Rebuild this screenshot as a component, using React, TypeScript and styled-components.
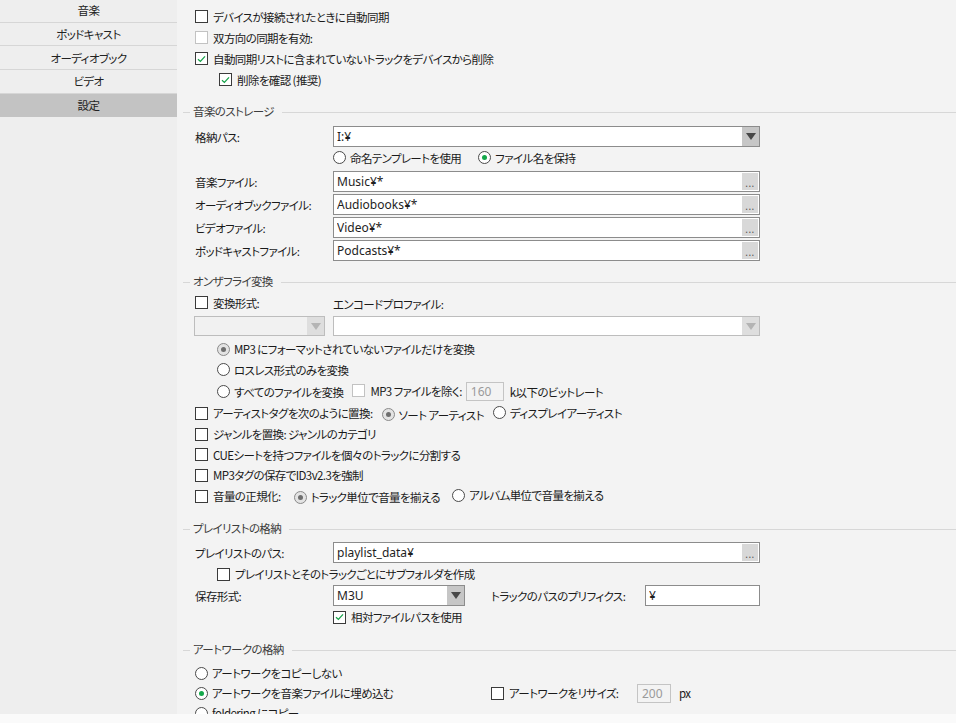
import React from "react";
import styled, { createGlobalStyle, css } from "styled-components";

const GlobalStyle = createGlobalStyle`
  html, body {
    margin: 0;
    background: #f3f3f3;
    overflow: hidden;
  }
  body {
    font-family: "Noto Sans CJK JP", "Noto Sans", sans-serif;
    font-size: 11.5px;
    letter-spacing: -0.6px;
    color: #1a1a1a;
    font-feature-settings: "palt";
  }
`;

const Window = styled.div`
  width: 956px;
  height: 723px;
  display: flex;
  flex-direction: column;
`;

const Body = styled.div`
  height: 714px;
  display: flex;
  overflow: hidden;
`;

const BottomStrip = styled.div`
  flex: 1;
  background: #fafafa;
`;

/* ---------- sidebar ---------- */

const Sidebar = styled.nav`
  width: 177px;
  flex-shrink: 0;
  background: #eeeeee;
  display: flex;
  flex-direction: column;
`;

const NavItem = styled.div<{ $active?: boolean; $first?: boolean }>`
  height: 22.7px;
  flex-shrink: 0;
  display: flex;
  align-items: center;
  justify-content: center;
  border-bottom: 1px solid #d6d6d6;
  color: #222;
  ${({ $first }) =>
    $first &&
    css`
      margin-top: -1px;
    `}
  ${({ $active }) =>
    $active &&
    css`
      background: #c3c3c3;
      border-bottom-color: #c3c3c3;
    `}
`;

/* ---------- main panel ---------- */

const Main = styled.main`
  flex: 1;
  background: #f3f3f3;
  padding: 6px 0 0 18px;
  display: flex;
  flex-direction: column;
  min-width: 0;
`;

const Row = styled.div<{ $h?: number; $indent?: number; $gap?: number }>`
  height: ${({ $h }) => $h ?? 21}px;
  flex-shrink: 0;
  display: flex;
  align-items: center;
  padding-left: ${({ $indent }) => $indent ?? 0}px;
  gap: ${({ $gap }) => $gap ?? 0}px;
  white-space: nowrap;
`;

const SectionHeader = styled.div<{ $top: number }>`
  margin: ${({ $top }) => $top}px 0 0 -12px;
  height: 20px;
  flex-shrink: 0;
  display: flex;
  align-items: center;
  gap: 3px;
  color: #3c3c3c;
  white-space: nowrap;

  &::before {
    content: "";
    width: 7px;
    height: 1px;
    background: #d7d7d7;
    margin-top: 3px;
  }
  &::after {
    content: "";
    flex: 1;
    height: 1px;
    background: #d7d7d7;
    margin: 3px 0 0 5px;
  }
`;

const FieldLabel = styled.span`
  width: 138px;
  flex-shrink: 0;
`;

const Text = styled.span<{ $ml?: number }>`
  margin-left: ${({ $ml }) => $ml ?? 0}px;
`;

const Cell = styled.div<{ $w: number }>`
  width: ${({ $w }) => $w}px;
  flex-shrink: 0;
  display: flex;
  align-items: center;
`;

/* ---------- controls ---------- */

const Box = styled.span<{ $disabled?: boolean }>`
  width: 13px;
  height: 13px;
  box-sizing: border-box;
  flex-shrink: 0;
  border: 1px solid ${({ $disabled }) => ($disabled ? "#c2c2c2" : "#3a3a3a")};
  background: #ffffff;
  display: inline-flex;
  align-items: center;
  justify-content: center;
`;

const Circle = styled.span<{ $tone?: "green" | "gray" | "off" }>`
  width: 13px;
  height: 13px;
  box-sizing: border-box;
  flex-shrink: 0;
  border-radius: 50%;
  border: 1px solid ${({ $tone }) => ($tone === "gray" ? "#8a8a8a" : "#4a4a4a")};
  background: ${({ $tone }) => ($tone === "gray" ? "#e3e3e3" : "#ffffff")};
  display: inline-flex;
  align-items: center;
  justify-content: center;

  &::after {
    content: "";
    width: 5px;
    height: 5px;
    border-radius: 50%;
    display: ${({ $tone }) => ($tone === "green" || $tone === "gray" ? "block" : "none")};
    background: ${({ $tone }) => ($tone === "gray" ? "#6e6e6e" : "#14a84a")};
  }
`;

const OptionLabel = styled.label<{ $gap?: number }>`
  display: inline-flex;
  align-items: center;
  gap: ${({ $gap }) => $gap ?? 5}px;
  white-space: nowrap;
`;

function Check({
  checked,
  disabled,
  children,
}: {
  checked?: boolean;
  disabled?: boolean;
  children?: React.ReactNode;
}) {
  return (
    <OptionLabel>
      <Box $disabled={disabled}>
        {checked && (
          <svg width="9" height="8" viewBox="0 0 9 8">
            <polyline
              points="1,4.2 3.4,6.4 8,1.4"
              fill="none"
              stroke="#17a34a"
              strokeWidth="1.3"
            />
          </svg>
        )}
      </Box>
      {children}
    </OptionLabel>
  );
}

function Radio({
  tone = "off",
  children,
}: {
  tone?: "green" | "gray" | "off";
  children: React.ReactNode;
}) {
  return (
    <OptionLabel $gap={4}>
      <Circle $tone={tone} />
      {children}
    </OptionLabel>
  );
}

const Field = styled.div<{ $w: number; $h?: number; $muted?: boolean; $disabled?: boolean }>`
  width: ${({ $w }) => $w}px;
  height: ${({ $h }) => $h ?? 21}px;
  box-sizing: border-box;
  flex-shrink: 0;
  display: flex;
  align-items: center;
  border: 1px solid ${({ $muted }) => ($muted ? "#bdbdbd" : "#8c8c8c")};
  background: ${({ $disabled }) => ($disabled ? "#f1f1f1" : "#ffffff")};
  padding-left: 3px;
  color: #1e1e1e;
  font-family: "Noto Sans", "Noto Sans CJK JP", sans-serif;
  font-size: 12px;
  letter-spacing: normal;
  font-feature-settings: normal;
`;

const FieldValue = styled.span`
  flex: 1;
  overflow: hidden;
`;

const SmallField = styled.div<{ $w: number }>`
  width: ${({ $w }) => $w}px;
  height: 19px;
  box-sizing: border-box;
  flex-shrink: 0;
  display: flex;
  align-items: center;
  padding-left: 4px;
  border: 1px solid #c4c4c4;
  background: #f3f3f3;
  color: #9a9a9a;
  font-family: "Noto Sans", sans-serif;
  font-size: 12px;
  letter-spacing: normal;
`;

const Ellipsis = styled.span`
  width: 16px;
  align-self: stretch;
  margin: 1px;
  background: #d8d8d8;
  color: #555;
  font-size: 10px;
  line-height: 1;
  display: flex;
  align-items: flex-end;
  justify-content: center;
  padding-bottom: 2px;
  letter-spacing: 0.5px;
`;

const DropButton = styled.span<{ $muted?: boolean }>`
  width: 17px;
  align-self: stretch;
  background: ${({ $muted }) => ($muted ? "#dedede" : "#c6c6c6")};
  display: flex;
  align-items: center;
  justify-content: center;

  &::after {
    content: "";
    border-left: 5px solid transparent;
    border-right: 5px solid transparent;
    border-top: 7px solid ${({ $muted }) => ($muted ? "#b4b4b4" : "#474747")};
  }
`;

function PathField({ value, w = 427 }: { value: string; w?: number }) {
  return (
    <Field $w={w}>
      <FieldValue>{value}</FieldValue>
      <Ellipsis>...</Ellipsis>
    </Field>
  );
}

function Select({
  value,
  w,
  h,
  muted,
  disabled,
}: {
  value?: string;
  w: number;
  h?: number;
  muted?: boolean;
  disabled?: boolean;
}) {
  return (
    <Field $w={w} $h={h} $muted={muted} $disabled={disabled}>
      <FieldValue>{value}</FieldValue>
      <DropButton $muted={muted} />
    </Field>
  );
}

const navItems = ["音楽", "ポッドキャスト", "オーディオブック", "ビデオ", "設定"];

const pathRows = [
  { label: "音楽ファイル:", value: "Music¥*" },
  { label: "オーディオブックファイル:", value: "Audiobooks¥*" },
  { label: "ビデオファイル:", value: "Video¥*" },
  { label: "ポッドキャストファイル:", value: "Podcasts¥*" },
];

export default function App() {
  return (
    <Window>
      <GlobalStyle />
      <Body>
        <Sidebar>
          {navItems.map((item, i) => (
            <NavItem key={item} $first={i === 0} $active={item === "設定"}>
              {item}
            </NavItem>
          ))}
        </Sidebar>

        <Main>
          <Row>
            <Check>デバイスが接続されたときに自動同期</Check>
          </Row>
          <Row>
            <Check disabled>双方向の同期を有効:</Check>
          </Row>
          <Row>
            <Check checked>自動同期リストに含まれていないトラックをデバイスから削除</Check>
          </Row>
          <Row $indent={24}>
            <Check checked>削除を確認 (推奨)</Check>
          </Row>

          <SectionHeader $top={11}>音楽のストレージ</SectionHeader>
          <Row $h={21} style={{ marginTop: 5 }}>
            <FieldLabel>格納パス:</FieldLabel>
            <Select value="I:¥" w={427} />
          </Row>
          <Row $indent={138} $gap={17}>
            <Radio>命名テンプレートを使用</Radio>
            <Radio tone="green">ファイル名を保持</Radio>
          </Row>
          {pathRows.map((r, i) => (
            <Row key={r.label} style={{ marginTop: i === 0 ? 3 : 2 }}>
              <FieldLabel>{r.label}</FieldLabel>
              <PathField value={r.value} />
            </Row>
          ))}

          <SectionHeader $top={10}>オンザフライ変換</SectionHeader>
          <Row style={{ marginTop: 2 }}>
            <FieldLabel>
              <Check>変換形式:</Check>
            </FieldLabel>
            <Text>エンコードプロファイル:</Text>
          </Row>
          <Row $h={20} $gap={8} style={{ marginTop: 2, marginLeft: -1 }}>
            <Select w={131} h={20} muted disabled />
            <Select w={427} h={20} muted />
          </Row>
          <Row $h={20.5} $indent={22} style={{ marginTop: 3 }}>
            <Radio tone="gray">MP3 にフォーマットされていないファイルだけを変換</Radio>
          </Row>
          <Row $h={20.5} $indent={22}>
            <Radio>ロスレス形式のみを変換</Radio>
          </Row>
          <Row $h={23} $indent={22}>
            <Radio>すべてのファイルを変換</Radio>
            <Text $ml={9}>
              <Check disabled>MP3 ファイルを除く:</Check>
            </Text>
            <Text $ml={4}>
              <SmallField $w={38}>160</SmallField>
            </Text>
            <Text $ml={6}>k以下のビットレート</Text>
          </Row>
          <Row $h={20.7}>
            <Check>アーティストタグを次のように置換:</Check>
            <Text $ml={9}>
              <Radio tone="gray">ソート アーティスト</Radio>
            </Text>
            <Text $ml={9}>
              <Radio>ディスプレイアーティスト</Radio>
            </Text>
          </Row>
          <Row $h={20.7}>
            <Check>ジャンルを置換: ジャンルのカテゴリ</Check>
          </Row>
          <Row $h={20.7}>
            <Check>CUEシートを持つファイルを個々のトラックに分割する</Check>
          </Row>
          <Row $h={20.7}>
            <Check>MP3タグの保存でID3v2.3を強制</Check>
          </Row>
          <Row $h={20.7}>
            <Check>音量の正規化:</Check>
            <Text $ml={13}>
              <Radio tone="gray">トラック単位で音量を揃える</Radio>
            </Text>
            <Text $ml={12}>
              <Radio>アルバム単位で音量を揃える</Radio>
            </Text>
          </Row>

          <SectionHeader $top={12}>プレイリストの格納</SectionHeader>
          <Row style={{ marginTop: 4 }}>
            <FieldLabel>プレイリストのパス:</FieldLabel>
            <PathField value="playlist_data¥" />
          </Row>
          <Row $h={22} $indent={22}>
            <Check>プレイリストとそのトラックごとにサブフォルダを作成</Check>
          </Row>
          <Row>
            <FieldLabel>保存形式:</FieldLabel>
            <Select value="M3U" w={132} />
            <Text $ml={26} style={{ width: 154 }}>
              トラックのパスのプリフィクス:
            </Text>
            <Field $w={115}>
              <FieldValue>¥</FieldValue>
            </Field>
          </Row>
          <Row $h={22} $indent={138}>
            <Check checked>相対ファイルパスを使用</Check>
          </Row>

          <SectionHeader $top={11}>アートワークの格納</SectionHeader>
          <Row $h={20} style={{ marginTop: 4 }}>
            <Radio>アートワークをコピーしない</Radio>
          </Row>
          <Row $h={20}>
            <Cell $w={296}>
              <Radio tone="green">アートワークを音楽ファイルに埋め込む</Radio>
            </Cell>
            <Cell $w={146}>
              <Check>アートワークをリサイズ:</Check>
            </Cell>
            <SmallField $w={34}>200</SmallField>
            <Text $ml={8}>px</Text>
          </Row>
          <Row $h={20}>
            <Radio>foldering にコピー</Radio>
          </Row>
        </Main>
      </Body>
      <BottomStrip />
    </Window>
  );
}
